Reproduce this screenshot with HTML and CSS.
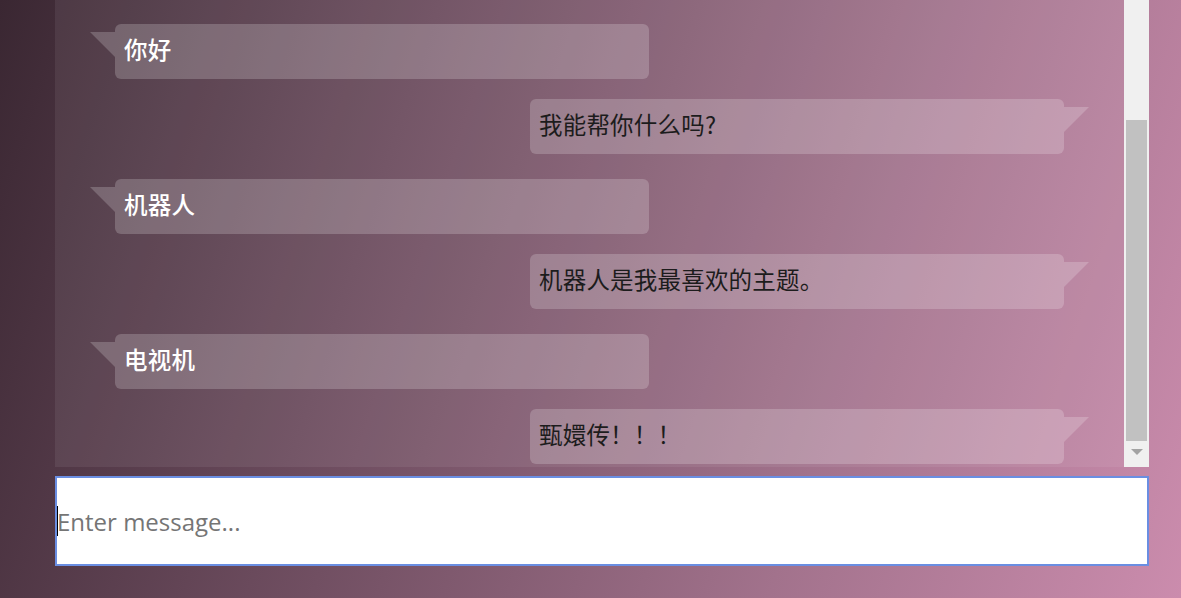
FILE: index.html
```html
<!DOCTYPE html>
<html lang="zh">
<head>
<meta charset="utf-8">
<title>Chat</title>
<link rel="stylesheet" href="styles.css">
</head>
<body>
<div class="page">
  <div class="chat">
    <div class="messages">
      <div class="msg bot"><div class="bubble">你好</div></div>
      <div class="msg user"><div class="bubble">我能帮你什么吗?</div></div>
      <div class="msg bot"><div class="bubble">机器人</div></div>
      <div class="msg user"><div class="bubble">机器人是我最喜欢的主题。</div></div>
      <div class="msg bot"><div class="bubble">电视机</div></div>
      <div class="msg user"><div class="bubble">甄嬛传！！！</div></div>
    </div>
    <div class="scrollbar">
      <div class="track-top"></div>
      <div class="thumb"></div>
      <div class="arrow-down"></div>
    </div>
  </div>
  <div class="composer">
    <span class="caret"></span>
    <input class="input" type="text" placeholder="Enter message...">
  </div>
</div>
</body>
</html>
```
FILE: styles.css
```css
html, body {
  margin: 0;
  padding: 0;
  height: 100%;
}
body {
  background: linear-gradient(108deg, #3a2732 0%, #6a4a5c 32%, #a2728c 70%, #cb8cad 100%);
  font-family: "Noto Sans CJK SC", "Noto Sans", sans-serif;
  overflow: hidden;
}
.page {
  width: 1094px;
  margin-left: 55px;
  display: flex;
  flex-direction: column;
}
.chat {
  height: 467px;
  display: flex;
  background: rgba(255, 255, 255, 0.07);
}
.messages {
  flex: 1;
  display: flex;
  flex-direction: column;
  padding-top: 24px;
  overflow: hidden;
}
.msg {
  display: flex;
}
.msg.bot {
  padding-left: 60px;
  margin-bottom: 20px;
}
.msg.user {
  justify-content: flex-end;
  padding-right: 60px;
  margin-bottom: 25px;
}
.bubble {
  position: relative;
  width: 534px;
  height: 55px;
  box-sizing: border-box;
  padding: 0 9px 5px 9px;
  display: flex;
  align-items: center;
  background: rgba(255, 255, 255, 0.2);
  border-radius: 6px;
  font-size: 23.5px;
  letter-spacing: 0.2px;
}
.bot .bubble {
  color: #ffffff;
  font-weight: 500;
}
.user .bubble {
  color: #1c1c1c;
  width: 534px;
}
.bubble::before {
  content: "";
  position: absolute;
  top: 8px;
  width: 0;
  height: 0;
  border-top: 25px solid rgba(255, 255, 255, 0.2);
}
.bot .bubble::before {
  left: -25px;
  border-left: 25px solid transparent;
}
.user .bubble::before {
  right: -25px;
  border-right: 25px solid transparent;
}
.scrollbar {
  width: 25px;
  background: #f0f0f0;
  display: flex;
  flex-direction: column;
  align-items: center;
}
.track-top {
  height: 120px;
}
.thumb {
  width: 21px;
  height: 321px;
  background: #c1c1c1;
}
.arrow-down {
  margin-top: 8px;
  width: 0;
  height: 0;
  border-left: 6px solid transparent;
  border-right: 6px solid transparent;
  border-top: 6px solid #a3a3a3;
}
.composer {
  margin-top: 9px;
  height: 90px;
  box-sizing: border-box;
  border: 2px solid #6a8ee2;
  background: #ffffff;
  display: flex;
  align-items: center;
  position: relative;
}
.caret {
  position: absolute;
  left: 0;
  top: 28px;
  width: 1px;
  height: 30px;
  background: #000;
}
.input {
  flex: 1;
  border: none;
  outline: none;
  background: transparent;
  height: 100%;
  padding: 0;
  font-family: "Open Sans", "Noto Sans", sans-serif;
  font-size: 24px;
  color: #333;
}
.input::placeholder {
  color: #757575;
}
```
